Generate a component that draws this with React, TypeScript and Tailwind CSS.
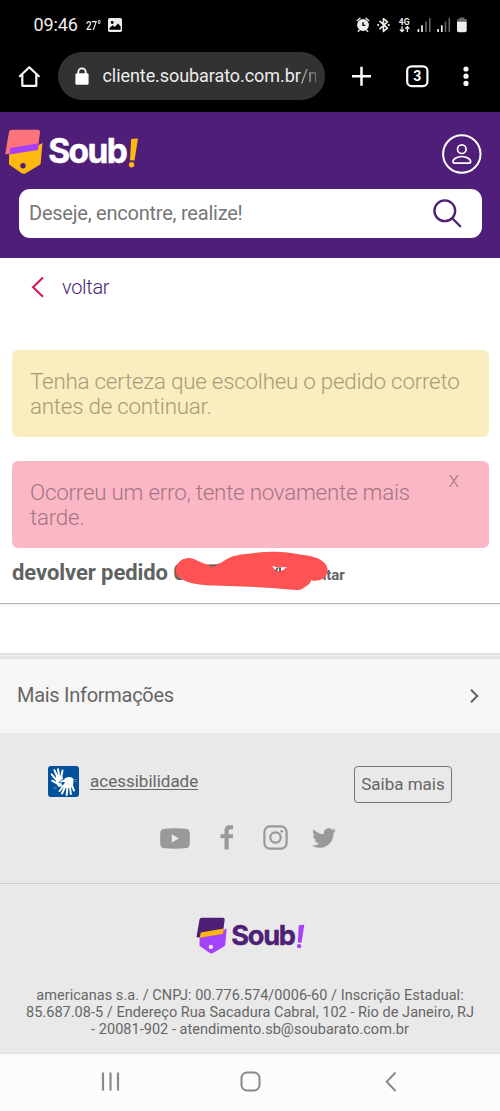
import type { ReactNode } from 'react';
import { FaTwitter } from 'react-icons/fa';

function StatusBar() {
  return (
    <div className="flex h-[50px] items-center pl-[33.5px] text-[#eeeeee]">
      <span className="w-[45px] whitespace-nowrap text-[18px] leading-none tracking-[-0.1px]">09:46</span>
      <span className="ml-[7.5px] w-[22px] origin-left scale-x-[0.76] text-[13px] leading-none font-medium">27°</span>
      <svg className="size-[14px]" viewBox="0 0 14 14">
        <rect width="14" height="14" rx="1.7" fill="#ededed" />
        <circle cx="4.2" cy="4.5" r="1.4" fill="#000" />
        <path d="M1.5 11.8V10l3.2-2.8 2 1.7L10 5.6l2.6 3v3.2Z" fill="#000" />
      </svg>
      <svg className="ml-[234px] h-[18px] w-[114px]" viewBox="356 16 114 18">
        <g fill="none" stroke="#eeeeee" strokeWidth="1.4" strokeLinecap="round" strokeLinejoin="round">
          <circle cx="363" cy="25" r="5.2" fill="#eeeeee" />
          <path d="M357.3 20.5 360 18.3M368.7 20.5 366 18.3M359.3 30.3 358.3 31.4M366.7 30.3 367.7 31.4" />
          <path d="M363 22.2V25.4H365.4" stroke="#000" strokeLinecap="butt" />
          <path d="m380 21.3 7.4 6.9-4 3.2V18.7l4 3.2-7.4 6.8" strokeWidth="1.6" />
          <path d="M378.1 25h.1M388.7 25h.1" strokeWidth="2" />
        </g>
        <text x="398.8" y="24.7" fontSize="8.6" fontWeight="700" fill="#eeeeee">4G</text>
        <g fill="none" stroke="#eeeeee" strokeWidth="1.3">
          <path d="M402 26.2V31.6M399.9 29.5 402 31.6 404.1 29.5M407.3 32V26.6M405.2 28.7 407.3 26.6 409.4 28.7" />
          <path d="M418.4 29V32M422 25.3V32M438.1 29V32M441.8 25.3V32" strokeWidth="1.7" />
        </g>
        <path d="M426 21.5V32M429.8 18V32M445.5 21.5V32M449.3 18V32" stroke="#636363" strokeWidth="1.6" />
        <path d="M459.5 17.5h5v1.6h2.2V22h-9.4v-2.9h2.2Z" fill="#6a6a6a" />
        <path d="M457 21.8h9.7v8.5a2 2 0 0 1-2 2H459a2 2 0 0 1-2-2Z" fill="#eeeeee" />
      </svg>
    </div>
  );
}

function BrowserBar() {
  return (
    <div className="flex h-[61px] items-start pt-[2px]">
      <svg className="mt-[12px] ml-[17px] size-[25px]" viewBox="0 0 25 25" fill="none" stroke="#f7f7f7" strokeWidth="2.2" strokeLinejoin="round" strokeLinecap="round">
        <path d="m2.8 12.2 9.5-9 9.5 9M5.3 10.6v11.2h14V10.6" />
      </svg>
      <div className="ml-[16px] flex h-[48px] w-[267px] items-center rounded-full bg-[#323232] pl-[17px]">
        <svg className="h-[18px] w-[14px]" viewBox="0 0 14 18">
          <path d="M3.3 8V5a3.7 3.7 0 0 1 7.4 0v3" fill="none" stroke="#fff" strokeWidth="1.8" />
          <rect x=".4" y="6.2" width="13.2" height="11.6" rx="1.5" fill="#fff" />
        </svg>
        <div className="ml-[13.5px] w-[213.5px] overflow-hidden text-[18px] leading-[26px] tracking-[-0.07px] whitespace-nowrap text-[#ededed]">
          cliente.soubarato.com.br<span className="bg-linear-to-r from-[#b0b0b0] to-[#606060] bg-clip-text text-transparent">/m</span>
        </div>
      </div>
      <svg className="mt-[9px] ml-[19.5px] h-[30px] w-[132px]" viewBox="345 61 132 30">
        <path d="M352 76.2h19M361.5 66.7v19" stroke="#fafafa" strokeWidth="2.5" fill="none" />
        <rect x="407.2" y="66.3" width="20.2" height="19.8" rx="4.4" stroke="#fafafa" strokeWidth="2.2" fill="none" />
        <text x="417.3" y="81.1" textAnchor="middle" fontSize="14" fontWeight="700" fill="#fafafa">3</text>
        <g fill="#fafafa"><circle cx="466" cy="69" r="2.6" /><circle cx="466" cy="76.2" r="2.6" /><circle cx="466" cy="83.4" r="2.6" /></g>
      </svg>
    </div>
  );
}

interface LogoProps {
  className: string;
  top: string;
  band: string;
  tag: string;
  word: string;
  hole: string;
}

function Logo({ className, top, band, tag, word, hole }: LogoProps) {
  return (
    <svg className={className} viewBox="0 0 136 48" role="img" aria-label="Soub!">
      <path d="M4.3 17h27.4l5.8-3-1.8 20.2a2.4 2.4 0 0 1-1.2 1.8l-13.8 8.3q-2 1-4 0L5.2 36.2A2 2 0 0 1 4 34.4Z" fill={tag} />
      <path d="M6.7.8h26a2.3 2.3 0 0 1 2.3 2.6l-2.3 17.2L1.8 25.3A1.2 1.2 0 0 1 .4 24L4 3.1A2.8 2.8 0 0 1 6.7.8Z" fill={top} />
      <path d="m5.5 19 28.6-4.7-1.2 6.6L4.3 25.5Z" fill={band} />
      <circle cx="18" cy="36.8" r="2.7" fill={hole} />
      <text x="43.2" y="34" className="font-['Inter',sans-serif] text-[33.5px] font-bold tracking-[-1.6px]" fill={word} stroke={word} strokeWidth=".5">Soub</text>
      <path d="m126.2 10 6.8-.6-3.5 22.2-4.5-.3Z" fill={tag} />
      <circle cx="126.6" cy="35.8" r="2.7" fill={tag} />
    </svg>
  );
}

function SiteHeader() {
  return (
    <header className="h-[146px] bg-[#4f1e78]">
      <div className="flex h-[77px] items-start justify-between pr-[18.5px] pl-[5px]">
        <Logo className="mt-[17px] h-[48px] w-[136px]" top="#fc7479" band="#a53ffc" tag="#feb911" word="#ffffff" hole="#4f1e78" />
        <svg className="mt-[22px] size-[40px]" viewBox="0 0 40 40" fill="none" stroke="#fff">
          <circle cx="19.8" cy="20" r="18.7" strokeWidth="2" />
          <circle cx="19.8" cy="15.2" r="4.3" strokeWidth="1.7" />
          <path d="M11 28.2c-.5-3 4-5.7 8.8-5.7s9.3 2.7 8.8 5.7c-.1.7-.6.9-1.3.9h-15c-.7 0-1.2-.2-1.3-.9Z" strokeWidth="1.7" />
        </svg>
      </div>
      <div className="mr-[18.5px] ml-[19px] flex h-[49.5px] items-center justify-between rounded-[11px] bg-white pr-[20px] pl-[10px]">
        <span className="-mt-[1px] text-[20px] leading-[24px] tracking-[-0.23px] whitespace-nowrap text-[#767676]">Deseje, encontre, realize!</span>
        <svg className="-mt-[1px] size-[30px]" viewBox="0 0 30 30" fill="none" stroke="#4d1f76" strokeWidth="2.3" strokeLinecap="round">
          <circle cx="12.8" cy="12.8" r="10.4" />
          <path d="m20.5 20.5 7.7 7.7" />
        </svg>
      </div>
    </header>
  );
}

function Alert({ className, children, dismiss }: { className: string; children: ReactNode; dismiss?: boolean }) {
  return (
    <div className={`mx-auto flex h-[87px] w-[477px] rounded-[6px] pl-[18.5px] font-light ${className}`}>
      <p className="w-[435px] pt-[18.5px] text-[22.4px] leading-[25px] tracking-[-0.24px] whitespace-nowrap">{children}</p>
      {dismiss && <button className="-ml-[16.5px] h-fit pt-[9px] text-[17px] leading-[22px]">X</button>}
    </div>
  );
}

function ReturnOrder() {
  return (
    <main className="h-[395px] bg-white">
      <button className="flex h-[92px] items-start pt-[17px] pl-[31px] text-[20px] leading-[24px] font-light tracking-[-0.3px] text-[#4b2375]">
        <svg className="mt-[1px] h-[22px] w-[13px]" viewBox="0 0 13 22" fill="none" stroke="#d41549" strokeWidth="2">
          <path d="M12 1.5 2 11.2l10 9.6" />
        </svg>
        <span className="ml-[18px]">voltar</span>
      </button>
      <Alert className="bg-[#faedbf] text-[#a79c77]">
        Tenha certeza que escolheu o pedido correto<br />antes de continuar.
      </Alert>
      <div className="h-[24px]" />
      <Alert className="bg-[#fcb7c6] text-[#a37682]" dismiss>
        Ocorreu um erro, tente novamente mais<br />tarde.
      </Alert>
      <div className="relative flex h-[55px] items-baseline pt-[11px] pl-[12px] font-bold text-[#5f6362]">
        <h1 className="w-[310.5px] text-[22px] leading-[28px] tracking-[-0.07px] whitespace-nowrap">devolver pedido 0</h1>
        <span className="text-[15px] tracking-[-0.1px]">itar</span>
        <svg className="absolute top-0 left-[170.5px] h-[45px] w-[162px]" viewBox="170 548 162 45">
          <path d="M175 568c2-8 10-12 18-9 5 2 9 5 15 5.600c7 .8 12-1 17-5 6-4 14-5 24-6 18-3 38-2 50 1 10 1 20 3 25 9 6 7 1 17-9 17-3 1-4-1-5 0-1 4-4 5-7 7-4 4-10 2-15 2-25-3-50-3-75-4-13 0-27-2-35-8-3-2-4-6-3-9.600Z" fill="#ff5252" />
          <path d="M208 564.500h8l-2 1.800q-3 .6-6 0Z" fill="#5f6362" />
          <path d="m271 566 6 1.500 9-.4-4 3.200-7 1Z" fill="#fff" />
          <path d="m273.500 571.500 2.200-4 2 .3-1.800 3.700ZM278 571.500v-4l2 .1v3.900Z" fill="#5f6362" />
        </svg>
      </div>
      <div className="h-[3px] border-t border-[#b8b8b8] bg-[#f4f4f4]" />
    </main>
  );
}

function LibrasIcon() {
  return (
    <svg className="size-[31px]" viewBox="0 0 31 31">
      <rect width="31" height="31" rx="3" fill="#03509b" />
      <g fill="none" stroke="#fff" strokeWidth="2" strokeLinecap="round" strokeLinejoin="round">
        <path d="M9.500 11 6.400 4.200M11.200 10.500 10 3.200M13.200 11 14.500 4.600M8 13.500 3.700 8.300M10 18 4.200 14.700" />
        <path d="M17.500 20 14 27.500M19.500 21 18.700 29M22 20.500 22.800 28M23.500 18.500 26 24.500M17 18 11.500 25" />
      </g>
      <path d="M8 10.500c1-1.500 5-1 6.700.5l.3 2.500 3-1.500-4.500 5.200 1 3-4 .7L8 17.200Z" fill="#fff" />
      <path d="m13.500 15.600 4.500-3.800c2.500-1.500 6.500-.8 7.600 1.500l-.5 5.700-3.300 3-5.300-.2.500-5.200Z" fill="#fff" />
      <path d="M16.500 13.200q-4 .5-5.500 3.300 2 .8 4-.2" stroke="#03509b" strokeWidth=".8" fill="none" />
      <path d="M5.500 21.500 8 23M6.500 20.500 9 22M26.500 13.500h2.500M26.500 15.500h2.500" stroke="#5d94c8" strokeWidth=".8" />
    </svg>
  );
}

function Footer() {
  return (
    <footer className="text-[#666666]">
      <div className="flex h-[80px] flex-col bg-[#f6f6f6]">
        <div className="h-[2px] shrink-0 bg-[#e3e3e3]" />
        <div className="h-[1px] shrink-0 bg-[#ededed]" />
        <div className="h-[3px] shrink-0 bg-[#e4e4e4]" />
        <div className="flex items-center justify-between pt-[24px] pr-[21.500px] pl-[17px]">
          <span className="text-[20px] leading-[24px] tracking-[-0.28px]">Mais Informações</span>
          <svg className="mt-[2px] h-[14px] w-[9px]" viewBox="0 0 9 14" fill="none" stroke="#606060" strokeWidth="1.900">
            <path d="m1 .8 6.300 6.200L1 13.200" />
          </svg>
        </div>
      </div>
      <section className="h-[151px] border-b border-[#cccccc] bg-[#e9e9e9]">
        <div className="flex h-[92px] items-start pt-[33px] pl-[48px]">
          <LibrasIcon />
          <a className="ml-[11px] pt-[4px] text-[17px] leading-[22px] underline decoration-1 underline-offset-2">acessibilidade</a>
          <button className="ml-auto mr-[48px] flex h-[37px] w-[98px] items-center justify-center rounded-[4px] border border-[#777777] pt-[1px] text-[17px] whitespace-nowrap">Saiba mais</button>
        </div>
        <div className="flex items-center pl-[160px]">
          <svg className="mt-[1px] h-[21px] w-[30px]" viewBox="0 0 30 21"><path d="M3 1Q15-.5 27 1q2.500.4 2.700 4Q30 10.500 29.700 16q-.3 3.600-2.700 4-12 1.500-24 0-2.500-.4-2.700-4Q0 10.500.3 5 .6 1.400 3 1Zm8.700 5.200v8.400L19 10.500Z" fill="#999999" /></svg>
          <svg className="ml-[30px] h-[25px] w-[14px]" viewBox="0 0 14 25"><path d="M4.500 24.500V13.300H.5V9.200h4V6c0-4 2-5.700 5.500-5.700h3v4h-2c-1.700 0-2.300.7-2.300 2.200v2.700H13v4.100H8.700v11.200Z" fill="#999999" /></svg>
          <svg className="ml-[29px] size-[25px]" viewBox="0 0 25 25" fill="none" stroke="#999999" strokeWidth="2.200"><rect x="1.400" y="1.400" width="22.200" height="22.200" rx="5.500" /><circle cx="12.500" cy="12.500" r="5.200" /><circle cx="18.800" cy="6.300" r="1.400" fill="#999999" stroke="none" /></svg>
          <FaTwitter className="ml-[24px] size-[24px] text-[#999999]" />
        </div>
      </section>
      <section className="h-[170px] border-b border-[#e1e0e8] bg-[#e9e9e9]">
        <div className="flex h-[103px] pt-[32.500px] pl-[195.500px]">
          <Logo className="h-[39px] w-[111px]" top="#4d2075" band="#fdb515" tag="#a342fa" word="#4d2075" hole="#e9e9e9" />
        </div>
        <p className="text-center text-[14.500px] leading-[17px] tracking-[0.035px] whitespace-nowrap">
          americanas s.a. / CNPJ: 00.776.574/0006-60 / Inscrição Estadual:<br />
          85.687.08-5 / Endereço Rua Sacadura Cabral, 102 - Rio de Janeiro, RJ<br />
          - 20081-902 - atendimento.sb@soubarato.com.br
        </p>
      </section>
    </footer>
  );
}

function NavigationBar() {
  return (
    <nav className="flex h-[57px] items-center bg-[#fcfcff] pl-[100px]">
      <svg className="mb-[1px] h-[22px] w-[299px]" viewBox="100 1071 299 22" fill="none" stroke="#8a8a8d" strokeWidth="2">
        <path d="M103 1072.500v18M110.500 1072.500v18M118 1072.500v18" strokeWidth="2.200" />
        <rect x="241.500" y="1072.500" width="18" height="18" rx="5.500" />
        <path d="m395.500 1072.500-8.800 9.200 8.800 9.300" />
      </svg>
    </nav>
  );
}

export default function App() {
  return (
    <div className="h-[1111px] w-[500px] overflow-hidden bg-white font-['Roboto',sans-serif]">
      <div className="h-[111.5px] bg-black">
        <StatusBar />
        <BrowserBar />
      </div>
      <div className="-mb-[0.5px] bg-[#4f1e78] pb-[1px]">
        <SiteHeader />
      </div>
      <ReturnOrder />
      <Footer />
      <NavigationBar />
    </div>
  );
}
